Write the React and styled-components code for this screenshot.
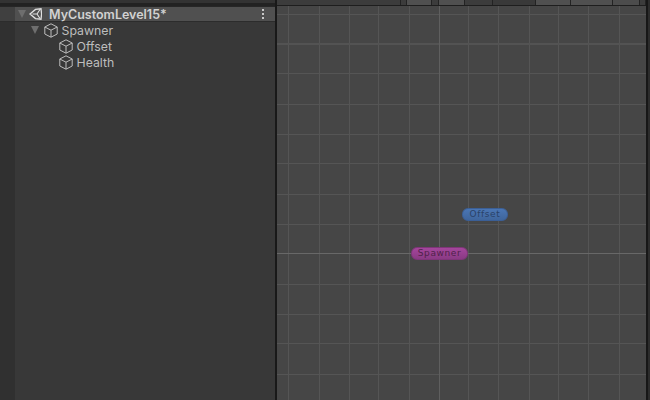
import React from 'react';
import styled, { createGlobalStyle } from 'styled-components';

const GlobalStyle = createGlobalStyle`
  html, body {
    margin: 0;
    padding: 0;
    background: #383838;
  }
  #root {
    width: 650px;
    height: 400px;
    overflow: hidden;
  }
`;

// grid positions read off the reference, relative to the graph canvas
const columns = [11, 42, 72, 101, 132, 191, 221, 252, 281, 311, 342];
const rows = [8, 67, 98, 128, 157, 188, 218, 278, 308, 337, 368];

const line = (dir, size, pos, color) =>
  `linear-gradient(${color}, ${color}) ${dir === 'x' ? `${pos}px 0 / ${size}px 100%` : `0 ${pos}px / 100% ${size}px`} no-repeat`;

const gridBackground = [
  line('x', 1, 162, '#5f5f5f'),
  line('y', 1, 247, '#686868'),
  line('y', 2, 37, '#535353'),
  ...columns.map((x) => line('x', 1, x, '#555555')),
  ...rows.map((y) => line('y', 1, y, '#555555')),
  '#464646',
].join(', ');

const Page = styled.div`
  display: flex;
  width: 650px;
  height: 400px;
  font-family: Inter, Roboto, sans-serif;
`;

const Hierarchy = styled.div`
  width: 275px;
  flex: none;
  display: flex;
  flex-direction: column;
  background: #383838;
`;

const TopStrip = styled.div`
  height: 6px;
  flex: none;
  box-sizing: border-box;
  background: #222;
  border-top: 3px solid #333;
`;

const SceneRow = styled.div`
  height: 16px;
  flex: none;
  box-sizing: border-box;
  padding-left: 18px;
  display: flex;
  align-items: center;
  background: linear-gradient(to right, #404040 15px, #505050 15px);
  border-top: 1px solid #262626;
  border-bottom: 1px solid #2c2c2c;
  color: #d2d2d2;
  font-size: 12.5px;
  font-weight: 600;
`;

const Body = styled.div`
  flex: 1;
  display: flex;
`;

const Gutter = styled.div`
  width: 15px;
  flex: none;
  background: #303030;
`;

const Tree = styled.div`
  flex: 1;
`;

const Row = styled.div`
  height: 16px;
  display: flex;
  align-items: center;
  padding-left: ${(p) => p.$indent}px;
  color: #bdbdbd;
  font-size: 12.3px;
`;

const Arrow = styled.span`
  width: 0;
  height: 0;
  flex: none;
  border-left: 4.5px solid transparent;
  border-right: 4.5px solid transparent;
  border-top: 8px solid #6e6e6e;
  margin-right: ${(p) => p.$gap}px;
`;

const Label = styled.span`
  margin-left: 3.5px;
`;

const SceneLabel = styled.span`
  margin-left: 7px;
  flex: 1;
`;

const Kebab = styled.span`
  display: flex;
  flex-direction: column;
  gap: 2px;
  margin-right: 11px;
  i {
    width: 2px;
    height: 2px;
    background: #c8c8c8;
  }
`;

const Divider = styled.div`
  width: 2px;
  flex: none;
  background: #191919;
`;

const GraphPane = styled.div`
  flex: 1;
  display: flex;
  flex-direction: column;
`;

const Toolbar = styled.div`
  height: 6px;
  flex: none;
  box-sizing: border-box;
  display: flex;
  background: #3c3c3c;
  border-bottom: 1px solid #1e1e1e;
`;

const ToolButton = styled.div`
  width: ${(p) => p.$w}px;
  flex: none;
  box-sizing: border-box;
  background: ${(p) => p.$bg || '#3c3c3c'};
  border-right: 1px solid #232323;
`;

const Canvas = styled.div`
  flex: 1;
  position: relative;
  background: ${gridBackground};
`;

const RightEdge = styled.div`
  width: 4px;
  flex: none;
  box-sizing: border-box;
  background: #2c2c2c;
  border-left: 2px solid #171717;
`;

const Node = styled.div`
  position: absolute;
  left: ${(p) => p.$x}px;
  top: ${(p) => p.$y}px;
  width: ${(p) => p.$w}px;
  height: 13px;
  box-sizing: border-box;
  border-radius: 6px;
  border: 1px solid ${(p) => p.$edge};
  background: linear-gradient(${(p) => p.$top}, ${(p) => p.$bottom});
  color: ${(p) => p.$ink};
  font-family: "DejaVu Sans", sans-serif;
  font-size: 9px;
  letter-spacing: 0.6px;
  line-height: 11px;
  text-align: center;
`;

function CubeIcon() {
  return (
    <svg width="14" height="15" viewBox="0 0 14 15" fill="none" stroke="#bdbdbd" strokeWidth="1">
      <path d="M7 .8 L13.2 4 V11 L7 14.2 L.8 11 V4 Z" />
      <path d="M.8 4 L7 7.2 L13.2 4 M7 7.2 V14.2" />
    </svg>
  );
}

function UnityIcon() {
  return (
    <svg width="13" height="12" viewBox="0 0 13 12" fill="none" stroke="#e2e2e2" strokeWidth="1.3">
      <path d="M1 6 L6.5 1.4 L12 .8 L12.6 6 L12 11.2 L6.5 10.6 Z" />
      <path d="M3.5 6 H8 L11 1.5 M8 6 L11 10.5" strokeWidth="1.1" />
    </svg>
  );
}

const toolbarButtons = [
  { w: 124 }, { w: 6 }, { w: 25, bg: '#505050' }, { w: 7 }, { w: 26, bg: '#505050' },
  { w: 28 }, { w: 43, bg: '#393939' }, { w: 35, bg: '#505050' }, { w: 42, bg: '#505050' },
  { w: 27, bg: '#4c4c4c' }, { w: 6 },
];

export default function App() {
  return (
    <>
      <GlobalStyle />
      <Page>
        <Hierarchy>
          <TopStrip />
          <SceneRow>
            <Arrow $gap={3} />
            <UnityIcon />
            <SceneLabel>MyCustomLevel15*</SceneLabel>
            <Kebab><i /><i /><i /></Kebab>
          </SceneRow>
          <Body>
            <Gutter />
            <Tree>
              <Row $indent={16}>
                <Arrow $gap={5} />
                <CubeIcon />
                <Label>Spawner</Label>
              </Row>
              <Row $indent={44}>
                <CubeIcon />
                <Label>Offset</Label>
              </Row>
              <Row $indent={44}>
                <CubeIcon />
                <Label>Health</Label>
              </Row>
            </Tree>
          </Body>
        </Hierarchy>
        <Divider />
        <GraphPane>
          <Toolbar>
            {toolbarButtons.map((b, i) => (
              <ToolButton key={i} $w={b.w} $bg={b.bg} />
            ))}
          </Toolbar>
          <Canvas>
            <Node $x={185} $y={202} $w={46} $top="#4a76b4" $bottom="#3f659c" $edge="#3b5f96" $ink="#2a4268">Offset</Node>
            <Node $x={134} $y={241} $w={57} $top="#a4469c" $bottom="#8a3a84" $edge="#7f3579" $ink="#4f2249">Spawner</Node>
          </Canvas>
        </GraphPane>
        <RightEdge />
      </Page>
    </>
  );
}
